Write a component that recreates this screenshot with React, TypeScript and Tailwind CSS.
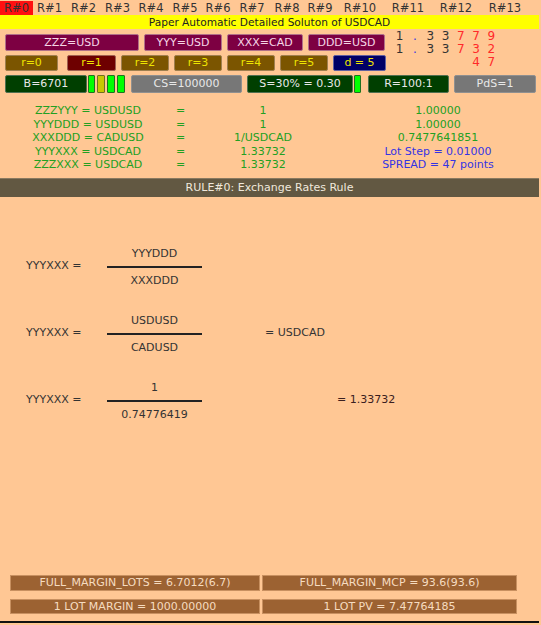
import React from "react";

const tabs = [
  { label: "R#0", w: "w-[33px]", active: true },
  { label: "R#1", w: "w-[33px]" },
  { label: "R#2", w: "w-[35px]" },
  { label: "R#3", w: "w-[33px]" },
  { label: "R#4", w: "w-[34px]" },
  { label: "R#5", w: "w-[34px]" },
  { label: "R#6", w: "w-[32px]" },
  { label: "R#7", w: "w-[36px]" },
  { label: "R#8", w: "w-[34px]" },
  { label: "R#9", w: "w-[32px]" },
  { label: "R#10", w: "w-[48px]" },
  { label: "R#11", w: "w-[48px]" },
  { label: "R#12", w: "w-[48px]" },
  { label: "R#13", w: "w-[50px]" },
];

const rows = [
  { a: "ZZZYYY = USDUSD", c: "1", d: "1.00000", blue: false },
  { a: "YYYDDD = USDUSD", c: "1", d: "1.00000", blue: false },
  { a: "XXXDDD = CADUSD", c: "1/USDCAD", d: "0.7477641851", blue: false },
  { a: "YYYXXX = USDCAD", c: "1.33732", d: "Lot Step = 0.01000", blue: true },
  { a: "ZZZXXX = USDCAD", c: "1.33732", d: "SPREAD = 47 points", blue: true },
];

// price digits: [char, colour]
const priceRows: [string, string][][] = [
  [["1", "k"], [".", "b"], ["3", "k"], ["3", "k"], ["7", "r"], ["7", "r"], ["9", "r"]],
  [["1", "k"], [".", "b"], ["3", "k"], ["3", "k"], ["7", "r"], ["3", "r"], ["2", "r"]],
  [["", "k"], ["", "k"], ["", "k"], ["", "k"], ["", "k"], ["4", "r"], ["7", "r"]],
];

const digitColor: Record<string, string> = {
  k: "text-[#333333]",
  b: "text-[#3a3ae0]",
  r: "text-[#ff2a2a]",
};

function Fraction({ top, bottom }: { top: string; bottom: string }) {
  return (
    <div className="w-[95px] flex flex-col items-center">
      <div className="h-[13px] leading-[13px]">{top}</div>
      <div className="mt-[6px] h-[2px] w-full bg-[#222]" />
      <div className="mt-[6px] h-[13px] leading-[13px]">{bottom}</div>
    </div>
  );
}

export default function App() {
  return (
    <div
      className="w-[541px] h-[625px] bg-[#ffc794] text-[11px] text-[#333333]"
      style={{ fontFamily: '"DejaVu Sans", Verdana, sans-serif' }}
    >
      <div className="w-[539px] h-[623px] border-b-2 border-[#111] flex flex-col">
        {/* Tabs */}
        <div className="flex h-[15px] pt-[1px]">
          {tabs.map((t) => (
            <div
              key={t.label}
              className={`${t.w} h-[14px] leading-[14px] text-center text-[11.5px] ${
                t.active ? "bg-[#ff1010] text-[#333]" : ""
              }`}
            >
              {t.label}
            </div>
          ))}
        </div>

        {/* Title bar */}
        <div className="h-[14px] leading-[14px] bg-[#ffff00] text-center text-[10.6px] text-[#222]">
          Paper Automatic Detailed Soluton of USDCAD
        </div>

        {/* Controls + price */}
        <div className="flex mt-[5px]">
          <div className="flex flex-col pl-[5px]">
            <div className="flex h-[17px] gap-[5px] text-[#f6d6e6]">
              <div className="w-[134px] rounded-[2px] border border-[#b07088] bg-[#7d0042] text-center leading-[15px]">ZZZ=USD</div>
              <div className="w-[78px] rounded-[2px] border border-[#b07088] bg-[#7d0042] text-center leading-[15px]">YYY=USD</div>
              <div className="w-[76px] rounded-[2px] border border-[#b07088] bg-[#7d0042] text-center leading-[15px]">XXX=CAD</div>
              <div className="w-[77px] rounded-[2px] border border-[#b07088] bg-[#7d0042] text-center leading-[15px]">DDD=USD</div>
            </div>
            <div className="flex h-[16px] mt-[4px] text-[#eee400]">
              <div className="w-[53px] rounded-[2px] border border-[#a08050] bg-[#7b5500] text-center leading-[14px]">r=0</div>
              <div className="ml-[9px] w-[49px] rounded-[2px] border border-[#a06050] bg-[#6e0000] text-center leading-[14px]">r=1</div>
              <div className="ml-[5px] w-[48px] rounded-[2px] border border-[#a08050] bg-[#7b5500] text-center leading-[14px]">r=2</div>
              <div className="ml-[5px] w-[48px] rounded-[2px] border border-[#a08050] bg-[#7b5500] text-center leading-[14px]">r=3</div>
              <div className="ml-[5px] w-[48px] rounded-[2px] border border-[#a08050] bg-[#7b5500] text-center leading-[14px]">r=4</div>
              <div className="ml-[5px] w-[48px] rounded-[2px] border border-[#a08050] bg-[#7b5500] text-center leading-[14px]">r=5</div>
              <div className="ml-[5px] w-[53px] rounded-[2px] border border-[#6060a0] bg-[#000066] text-center leading-[14px]">d = 5</div>
            </div>
          </div>
          <div className="ml-[6px] mt-[-4px] flex flex-col text-[12px]">
            {priceRows.map((r, i) => (
              <div key={i} className="flex h-[13px] leading-[13px]">
                {r.map(([ch, c], j) => (
                  <div key={j} className={`w-[15.3px] text-center ${digitColor[c]}`}>
                    {ch}
                  </div>
                ))}
              </div>
            ))}
          </div>
        </div>

        {/* Status row */}
        <div className="flex h-[18px] mt-[4px] pl-[5px] text-[#e8e8e8]">
          <div className="w-[82px] rounded-[2px] border border-[#507050] bg-[#003f00] text-center leading-[16px]">B=6701</div>
          <div className="ml-[1px] w-[7px] rounded-[1px] border border-[#207020] bg-[#00ff00]" />
          <div className="ml-[2px] w-[8px] rounded-[1px] border border-[#707020] bg-[#c8c800]" />
          <div className="ml-[2px] w-[8px] rounded-[1px] border border-[#207020] bg-[#00ff00]" />
          <div className="ml-[2px] w-[8px] rounded-[1px] border border-[#207020] bg-[#00ff00]" />
          <div className="ml-[6px] w-[111px] rounded-[2px] border border-[#909090] bg-[#777777] text-center leading-[16px]">CS=100000</div>
          <div className="ml-[5px] w-[106px] rounded-[2px] border border-[#507050] bg-[#003f00] text-center leading-[16px]">S=30% = 0.30</div>
          <div className="ml-[1px] w-[7px] rounded-[1px] border border-[#207020] bg-[#00ff00]" />
          <div className="ml-[7px] w-[81px] rounded-[2px] border border-[#507050] bg-[#003f00] text-center leading-[16px]">R=100:1</div>
          <div className="ml-[5px] w-[82px] rounded-[2px] border border-[#909090] bg-[#777777] text-center leading-[16px]">PdS=1</div>
        </div>

        {/* Pair table */}
        <div className="mt-[11px] grid grid-cols-[176px_8px_158px_192px] text-[#22a022]">
          {rows.map((r) => (
            <React.Fragment key={r.a}>
              <div className="h-[13.5px] leading-[13.5px] text-center">{r.a}</div>
              <div className="h-[13.5px] leading-[13.5px] text-center">=</div>
              <div className="h-[13.5px] leading-[13.5px] text-center">{r.c}</div>
              <div className={`h-[13.5px] leading-[13.5px] text-center ${r.blue ? "text-[#3434e4]" : ""}`}>{r.d}</div>
            </React.Fragment>
          ))}
        </div>

        {/* Rule header */}
        <div className="mt-[6px] h-[19px] border-t border-[#8a7a60] bg-[#625842] text-center leading-[18px] text-[#f0e8dc]">
          RULE#0: Exchange Rates Rule
        </div>

        {/* Formulas */}
        <div className="mt-[50px] flex flex-col gap-[27px] text-[#333]">
          <div className="flex items-center">
            <div className="ml-[26px] w-[81px]">YYYXXX =</div>
            <Fraction top="YYYDDD" bottom="XXXDDD" />
          </div>
          <div className="flex items-center">
            <div className="ml-[26px] w-[81px]">YYYXXX =</div>
            <Fraction top="USDUSD" bottom="CADUSD" />
            <div className="ml-[63px]">= USDCAD</div>
          </div>
          <div className="flex items-center">
            <div className="ml-[26px] w-[81px]">YYYXXX =</div>
            <Fraction top="1" bottom="0.74776419" />
            <div className="ml-[135px] text-[#3a2020]">= 1.33732</div>
          </div>
        </div>

        {/* Footer */}
        <div className="mt-auto mb-[7px] flex flex-col gap-[8px] pl-[10px] text-[#f6dcc0]">
          <div className="flex gap-[2px] h-[16px]">
            <div className="w-[250px] border border-[#c89060] bg-[#9c6232] text-center leading-[14px]">FULL_MARGIN_LOTS = 6.7012(6.7)</div>
            <div className="w-[255px] border border-[#c89060] bg-[#9c6232] text-center leading-[14px]">FULL_MARGIN_MCP = 93.6(93.6)</div>
          </div>
          <div className="flex gap-[2px] h-[15px]">
            <div className="w-[250px] border border-[#c89060] bg-[#9c6232] text-center leading-[13px]">1 LOT MARGIN = 1000.00000</div>
            <div className="w-[255px] border border-[#c89060] bg-[#9c6232] text-center leading-[13px]">1 LOT PV = 7.47764185</div>
          </div>
        </div>
      </div>
    </div>
  );
}
